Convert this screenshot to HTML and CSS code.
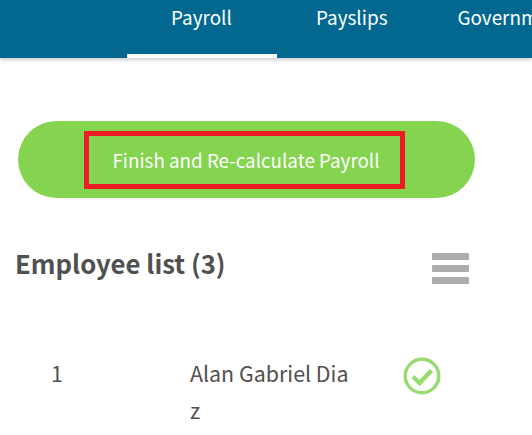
FILE: index.html
```html
<!DOCTYPE html>
<html lang="en">
<head>
    <meta charset="UTF-8">
    <title>Payroll</title>
    <link rel="stylesheet" href="styles.css">
</head>
<body>
    <nav class="top-nav">
        <a class="nav-item active" href="#">Payroll</a>
        <a class="nav-item" href="#">Payslips</a>
        <a class="nav-item" href="#">Government</a>
    </nav>

    <div class="finish-wrap">
        <button class="finish-btn" type="button">
            <span class="highlight">Finish and Re-calculate Payroll</span>
        </button>
    </div>

    <div class="list-head">
        <h2>Employee list (3)</h2>
        <div class="menu-icon"><span></span><span></span><span></span></div>
    </div>

    <div class="employee-row">
        <div class="emp-num">1</div>
        <div class="emp-name">Alan Gabriel Diaz</div>
        <svg class="emp-check" width="38" height="38" viewBox="0 0 38 38">
            <circle cx="19" cy="19" r="16.800" fill="none" stroke="#98dc70" stroke-width="3.500"/>
            <path d="M10 19.500 L16.500 26 L28.500 13.500" fill="none" stroke="#98dc70" stroke-width="4.500"/>
        </svg>
    </div>
</body>
</html>
```

FILE: styles.css
```css
html, body {
    margin: 0;
    padding: 0;
    overflow: hidden;
}

body {
    font-family: "Noto Sans CJK JP", "Noto Sans", sans-serif;
    background-color: white;
    color: #505050;
}

.top-nav {
    display: flex;
    height: 58px;
    padding-left: 127px;
    background-color: #036890;
    box-shadow: 0 2px 4px rgba(0, 0, 0, 0.2);
    overflow: hidden;
}

.nav-item {
    box-sizing: border-box;
    flex: none;
    height: 58px;
    padding: 4px 31px 0 39px;
    font-size: 18.900px;
    line-height: 26px;
    color: white;
    text-decoration: none;
}

.nav-item.active {
    width: 150px;
    padding: 4px 0 0 44px;
    border-bottom: 4px solid white;
}

.finish-wrap {
    padding: 63px 57px 0 18px;
}

.finish-btn {
    display: flex;
    justify-content: center;
    align-items: center;
    width: 100%;
    height: 77px;
    padding: 0;
    border: none;
    border-radius: 39px;
    background-color: #84d44f;
    font-family: inherit;
}

.highlight {
    box-sizing: border-box;
    width: 321px;
    height: 58px;
    margin-right: 5px;
    padding-left: 4px;
    border: 5px solid #ee1c25;
    font-size: 18.800px;
    line-height: 48px;
    color: white;
    text-align: center;
}

.list-head {
    display: flex;
    justify-content: space-between;
    align-items: flex-start;
    height: 34px;
    margin-top: 48px;
    padding: 0 63px 0 15px;
}

.list-head h2 {
    margin: 0;
    font-size: 25.700px;
    font-weight: 700;
    line-height: 34px;
}

.menu-icon {
    display: flex;
    flex-direction: column;
    gap: 5px;
    width: 37px;
    margin-top: 7px;
}

.menu-icon span {
    height: 7px;
    border-radius: 1px;
    background-color: #acacac;
}

.employee-row {
    display: flex;
    align-items: flex-start;
    margin-top: 74px;
    font-size: 21.400px;
    line-height: 37px;
}

.emp-num {
    width: 190px;
    padding-left: 51px;
    box-sizing: border-box;
}

.emp-name {
    width: 163px;
    word-break: break-all;
}

.emp-check {
    flex: none;
    margin: 3px 0 0 50px;
}
```
